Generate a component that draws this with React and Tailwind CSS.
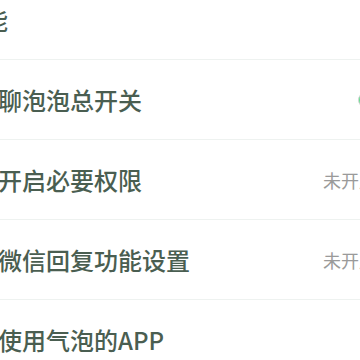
export default function App() {
  const rows = [
    { t: "聊泡泡总开关", r: "switch" },
    { t: "开启必要权限", r: "未开启" },
    { t: "微信回复功能设置", r: "未开启" },
    { t: "使用气泡的APP", r: null },
  ];
  return (
    <div
      className="w-[360px] h-[360px] overflow-hidden bg-white relative"
      style={{ fontFamily: '"Noto Sans CJK SC", "Noto Sans", sans-serif' }}
    >
      <div className="h-[60px] border-b border-[#eef2f0] flex items-start pt-[7px]">
        <span className="-ml-[40px] text-[24px] leading-[26px] font-medium text-[#4a5e51]">功能</span>
      </div>
      {rows.map((row, i) => (
        <div
          key={i}
          className="h-[80px] border-b border-[#eef2f0] flex items-center justify-between"
        >
          <span className="-ml-[2px] text-[24px] leading-[28px] font-medium text-[#4a5e51] whitespace-nowrap">
            {row.t}
          </span>
          {row.r === "switch" ? (
            <div className="w-[40px] h-[16px] -mr-[38px] rounded-full border border-[#d4d4d4] bg-[#5ee08a]" />
          ) : row.r ? (
            <span className="text-[18px] leading-[24px] text-[#9a9a9a] whitespace-nowrap -mr-[17px]">
              {row.r}
            </span>
          ) : null}
        </div>
      ))}
    </div>
  );
}
